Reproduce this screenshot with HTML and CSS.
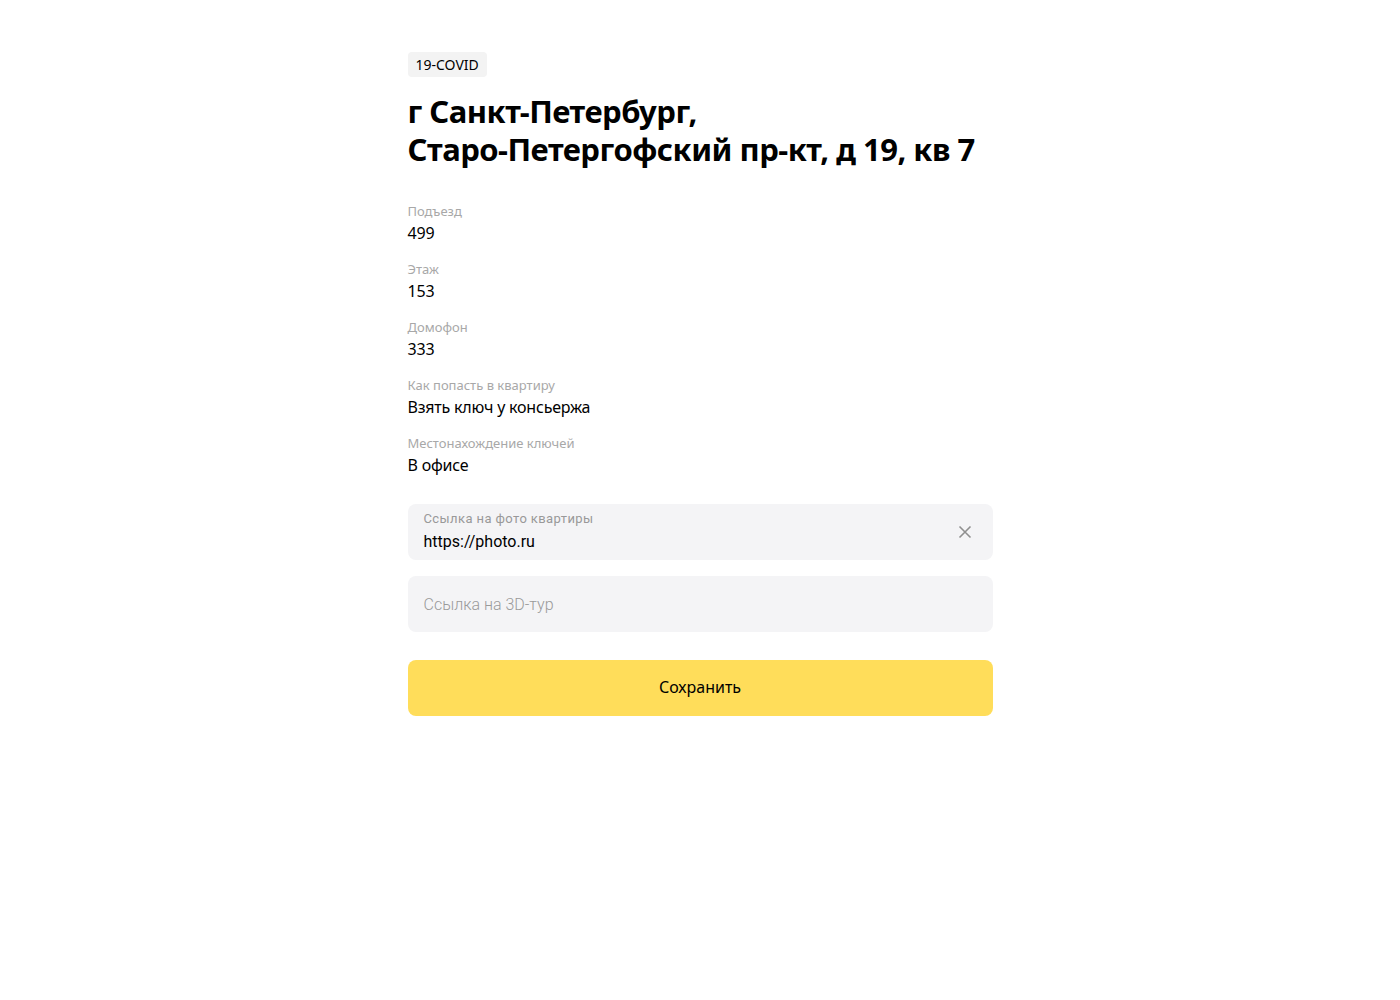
FILE: index.html
```html
<!DOCTYPE html>
<html lang="ru">
<head>
<meta charset="utf-8">
<link rel="stylesheet" href="styles.css">
</head>
<body>
<main class="page">
  <span class="tag">19-COVID</span>
  <h1 class="title">г Санкт-Петербург,<br>Старо-Петергофский пр-кт, д 19, кв 7</h1>
  <dl class="info">
    <div class="info-item"><dt>Подъезд</dt><dd>499</dd></div>
    <div class="info-item"><dt>Этаж</dt><dd>153</dd></div>
    <div class="info-item"><dt>Домофон</dt><dd>333</dd></div>
    <div class="info-item"><dt>Как попасть в квартиру</dt><dd>Взять ключ у консьержа</dd></div>
    <div class="info-item"><dt>Местонахождение ключей</dt><dd>В офисе</dd></div>
  </dl>
  <div class="field filled">
    <div class="field-body">
      <span class="field-label">Ссылка на фото квартиры</span>
      <span class="field-value">https://photo.ru</span>
    </div>
    <svg class="clear" width="14" height="14" viewBox="0 0 14 14"><path d="M1.5 1.5 L12.5 12.5 M12.5 1.5 L1.5 12.5" stroke="#8f8f8f" stroke-width="1.6" fill="none"/></svg>
  </div>
  <div class="field">
    <span class="field-placeholder">Ссылка на 3D-тур</span>
  </div>
  <button class="save">Сохранить</button>
</main>
</body>
</html>
```
FILE: styles.css
```css
* { box-sizing: border-box; }
html, body { margin: 0; padding: 0; background: #fff; }
body { font-family: "Noto Sans", "Open Sans", sans-serif; color: #000; }
.page {
  width: 585px;
  margin: 0 auto;
  padding-top: 52px;
  display: flex;
  flex-direction: column;
  align-items: flex-start;
}
.tag {
  display: inline-block;
  background: #f3f3f3;
  border-radius: 4px;
  height: 25px;
  line-height: 25px;
  padding: 0 8px;
  font-size: 14px;
}
.title {
  margin: 15px 0 0;
  font-size: 31px;
  line-height: 38px;
  font-weight: 700;
  letter-spacing: -0.5px;
}
.info { margin: 34px 0 0; display: flex; flex-direction: column; gap: 16px; }
.info-item { display: flex; flex-direction: column; }
.info dt { font-size: 13px; line-height: 18px; color: #a8a8a8; }
.info dd { margin: 2px 0 0; font-size: 16px; line-height: 22px; letter-spacing: -0.2px; }
.field {
  width: 100%;
  height: 56px;
  background: #f4f4f6;
  border-radius: 8px;
  display: flex;
  align-items: center;
  padding: 0 16px;
  margin-top: 16px;
}
.field.filled { margin-top: 28px; }
.field-body { flex: 1; display: flex; flex-direction: column; }
.field-label { font-family: Roboto, sans-serif; font-size: 13px; line-height: 16px; color: #999; letter-spacing: 0.4px; margin-top: -2px; }
.field-value { font-family: Roboto, sans-serif; font-size: 16px; line-height: 20px; margin-top: 5px; }
.clear { margin-right: 5px; }
.field-placeholder { font-family: Roboto, sans-serif; font-weight: 300; font-size: 16px; color: #9a9a9a; }
.save {
  width: 100%;
  height: 56px;
  margin-top: 28px;
  padding: 0 0 2px;
  background: #ffdd5a;
  border: none;
  border-radius: 8px;
  font-family: "Noto Sans", sans-serif;
  font-size: 16px;
  color: #000;
}
```
